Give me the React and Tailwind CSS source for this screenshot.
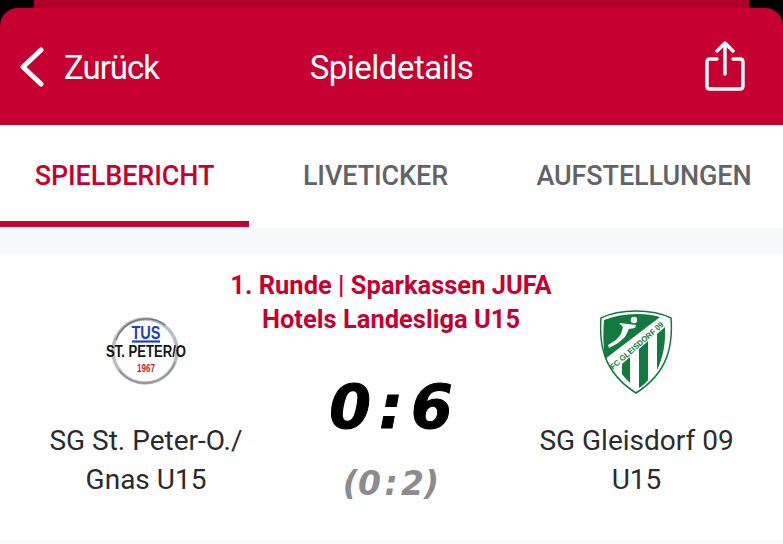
import React from "react";

function StPeterLogo() {
  return (
    <svg width="112" height="76" viewBox="-14 0 112 76">
      <circle cx="41" cy="41" r="32" fill="#fff" stroke="#b9bcc0" strokeWidth="3.5" />
      <path d="M12 30 A32 32 0 0 1 61 15" fill="none" stroke="#77797d" strokeWidth="1.5" />
      <path d="M15 60 A32 32 0 0 0 71 52" fill="none" stroke="#8d9094" strokeWidth="1.5" />
      <text x="42" y="29" textAnchor="middle" fontFamily="Liberation Sans" fontWeight="700" fontSize="19" fill="#1f3fc4" textLength="29" lengthAdjust="spacingAndGlyphs">TUS</text>
      <path d="M28 31.5 H56" stroke="#1f3fc4" strokeWidth="2.2" />
      <text x="42" y="47" textAnchor="middle" fontFamily="Liberation Sans" fontWeight="700" fontSize="16" fill="#151515" textLength="80" lengthAdjust="spacingAndGlyphs">ST. PETER/O</text>
      <text x="42" y="62" textAnchor="middle" fontFamily="Liberation Sans" fontWeight="700" fontSize="10.5" fill="#d0182a" textLength="18" lengthAdjust="spacingAndGlyphs">1967</text>
    </svg>
  );
}

function GleisdorfLogo() {
  return (
    <svg width="73" height="84" viewBox="0 0 73 84">
      <path d="M36 1 C49 1 61 3 71 8 C73 34 69 62 36 83 C3 62 -1 34 1 8 C11 3 23 1 36 1Z" fill="#fff" stroke="#127a3e" strokeWidth="1.5" />
      <path d="M36 4 C46 4 54 5 60 7 L5 49 C3 36 3 22 4 10 C14 6 25 4 36 4Z" fill="#127a3e" />
      <path d="M22 54 L30 47 L30 73 C27 70 24 67 22 64Z" fill="#127a3e" />
      <path d="M39 39 L48 31 L48 70 C45 74 42 76 39 78Z" fill="#127a3e" />
      <path d="M57 24 L65 17 C66 32 63 48 57 60Z" fill="#127a3e" />
      <circle cx="34" cy="10" r="3.2" fill="#fff" />
      <path d="M19 13 L36 15 L35 18 L29 19 L25 27 L18 33 L9 38 L8 35 L16 30 L21 24 L23 17Z" fill="#fff" />
      <text x="0" y="0" transform="translate(13 60) rotate(-41)" fontFamily="Liberation Sans" fontWeight="700" fontSize="8" fill="#127a3e" textLength="68" lengthAdjust="spacingAndGlyphs">FC GLEISDORF 09</text>
    </svg>
  );
}

function Tab({ label, active, className }) {
  return (
    <div className={"shrink-0 flex flex-col items-center " + className}>
      <div className={"pt-[31px] h-[96px] text-[27px] leading-[40px] font-medium tracking-[-0.1px] whitespace-nowrap " + (active ? "text-[#c70032]" : "text-[#626367]")}>
        {label}
      </div>
      <div className={"h-[6px] w-full " + (active ? "bg-[#c70032]" : "")} />
    </div>
  );
}

export default function App() {
  return (
    <div className="w-[783px] h-[544px] overflow-hidden bg-white font-['Roboto',sans-serif]">
      <div className="bg-black">
        <div className="h-[8px] px-[34px]">
          <div className="h-full bg-[#ad002b]" />
        </div>
        <div className="h-[117px] bg-[#c70032] rounded-t-[18px] grid grid-cols-[1fr_auto_1fr] items-center text-white pl-[20px] pr-[38px] pt-[1px]">
          <div className="flex items-center gap-[20px]">
            <svg width="24" height="40" viewBox="0 0 24 40" fill="none" stroke="#fff" strokeWidth="5" strokeLinecap="round" strokeLinejoin="round">
              <path d="M21 3 L3 20 L21 37" />
            </svg>
            <span className="text-[33px] leading-none tracking-[-1px]">Zurück</span>
          </div>
          <span className="text-[33px] leading-none tracking-[-0.5px] ml-[18px]">Spieldetails</span>
          <svg width="40" height="50" viewBox="0 0 40 50" fill="none" stroke="#fff" strokeWidth="3.4" strokeLinecap="round" strokeLinejoin="round" className="justify-self-end mt-[-3px]">
            <path d="M12 18 H5 Q2 18 2 21 V45 Q2 48 5 48 H35 Q38 48 38 45 V21 Q38 18 35 18 H28" />
            <path d="M20 33 V3 M12 10 L20 2 L28 10" />
          </svg>
        </div>
      </div>
      <div className="flex h-[103px]">
        <Tab label="SPIELBERICHT" active className="w-[249px]" />
        <Tab label="LIVETICKER" className="w-[253px]" />
        <Tab label="AUFSTELLUNGEN" className="w-[281px] pl-[3px]" />
      </div>
      <div className="h-[26px] bg-[#f8f9fa]" />
      <div className="flex h-[290px] border-b-[3px] border-[#f8f9fa]">
        <div className="w-[292px] shrink-0 flex flex-col items-center pt-[56px]">
          <div className="h-[84px] flex items-start">
            <StPeterLogo />
          </div>
          <div className="mt-[27px] text-center text-[28px] leading-[39px] text-[#2b2b2b]">
            SG St. Peter-O./<br />Gnas U15
          </div>
        </div>
        <div className="w-[198px] shrink-0 flex flex-col items-center">
          <div className="mt-[14px] text-center text-[25.5px] leading-[34px] font-bold text-[#c70032] whitespace-nowrap">
            1. Runde | Sparkassen JUFA<br />Hotels Landesliga U15
          </div>
          <div className="mt-[39px] font-['DejaVu_Sans',sans-serif] italic font-bold text-[60px] leading-[64px] [word-spacing:-13px] [-webkit-text-stroke:1px_black] text-black whitespace-nowrap">0 : 6</div>
          <div className="mt-[25px] font-['DejaVu_Sans',sans-serif] italic font-bold text-[33px] leading-[40px] [word-spacing:-8px] text-[#8c8c8f] whitespace-nowrap">(0 : 2)</div>
        </div>
        <div className="w-[293px] shrink-0 flex flex-col items-center pt-[56px]">
          <div className="h-[84px]">
            <GleisdorfLogo />
          </div>
          <div className="mt-[27px] text-center text-[28px] leading-[39px] text-[#2b2b2b]">
            SG Gleisdorf 09<br />U15
          </div>
        </div>
      </div>
    </div>
  );
}
